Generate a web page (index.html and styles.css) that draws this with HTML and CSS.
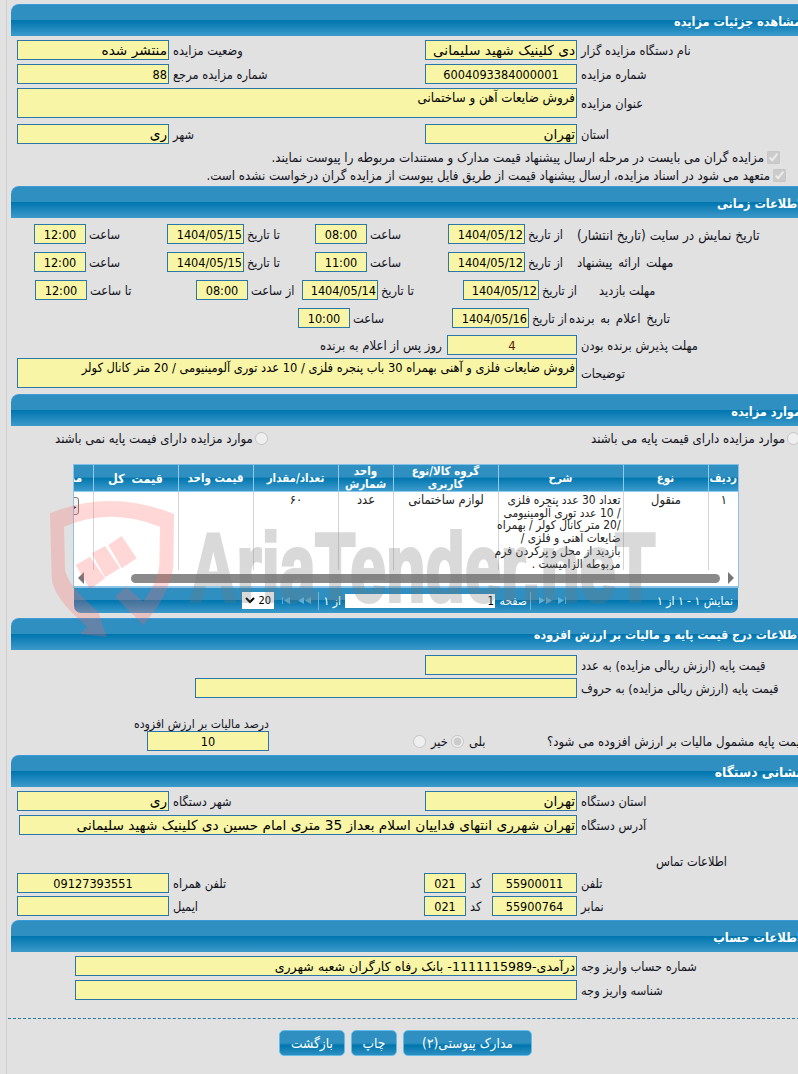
FILE: index.html
```html
<!DOCTYPE html>
<html lang="fa">
<head>
<meta charset="utf-8">
<title>مشاهده جزئیات مزایده</title>
<link rel="stylesheet" href="styles.css">
</head>
<body>
<div class="frame">
<main class="page">

<section class="sec s1">
  <h2 class="bar">مشاهده جزئیات مزایده</h2>
  <div class="row r2col"><input class="fld w152 rt" readonly value="منتشر شده"><span class="lbl">وضعیت مزایده</span><input class="fld w152 rt" readonly value="دی کلینیک شهید سلیمانی"><span class="lbl">نام دستگاه مزایده گزار</span></div>
  <div class="row r2col"><input class="fld w152" readonly value="88"><span class="lbl">شماره مزایده مرجع</span><input class="fld w152 ct" readonly value="6004093384000001"><span class="lbl">شماره مزایده</span></div>
  <div class="row tall rwide"><textarea class="fld area a-title" readonly>فروش ضایعات آهن و ساختمانی</textarea><span class="lbl">عنوان مزایده</span></div>
  <div class="row r2col gap6"><input class="fld w152 rt" readonly value="ری"><span class="lbl">شهر</span><input class="fld w152 rt" readonly value="تهران"><span class="lbl">استان</span></div>
  <div class="check c1"><input type="checkbox" checked disabled><span>مزایده گران می بایست در مرحله ارسال پیشنهاد قیمت مدارک و مستندات مربوطه را پیوست نمایند.</span></div>
  <div class="check c2"><input type="checkbox" checked disabled><span>متعهد می شود در اسناد مزایده، ارسال پیشنهاد قیمت از طریق فایل پیوست از مزایده گران درخواست نشده است.</span></div>
</section>

<section class="sec s2">
  <h2 class="bar">اطلاعات زمانی</h2>
  <div class="row rtime first"><input class="fld ct" readonly value="12:00"><span class="lbl">ساعت</span><input class="fld dt" readonly value="1404/05/15"><span class="lbl">تا تاریخ</span><input class="fld ct" readonly value="08:00"><span class="lbl">ساعت</span><input class="fld dt" readonly value="1404/05/12"><span class="lbl">از تاریخ</span><span class="lbl lastlbl lbl-long">تاریخ نمایش در سایت (تاریخ انتشار)</span></div>
  <div class="row rtime"><input class="fld ct" readonly value="12:00"><span class="lbl">ساعت</span><input class="fld dt" readonly value="1404/05/15"><span class="lbl">تا تاریخ</span><input class="fld ct" readonly value="11:00"><span class="lbl">ساعت</span><input class="fld dt" readonly value="1404/05/12"><span class="lbl">از تاریخ</span><span class="lbl lastlbl lbl-spaced">مهلت ارائه پیشنهاد</span></div>
  <div class="row rvisit"><input class="fld ct" readonly value="12:00"><span class="lbl">تا ساعت</span><input class="fld ct" readonly value="08:00"><span class="lbl">از ساعت</span><input class="fld dt" readonly value="1404/05/14"><span class="lbl">تا تاریخ</span><input class="fld dt" readonly value="1404/05/12"><span class="lbl">از تاریخ</span><span class="lbl lastlbl">مهلت بازدید</span></div>
  <div class="row rannounce"><input class="fld ct" readonly value="10:00"><span class="lbl">ساعت</span><input class="fld dt" readonly value="1404/05/16"><span class="lbl">از تاریخ</span><span class="lbl lastlbl lbl-spaced">تاریخ اعلام به برنده</span></div>
  <div class="row raccept"><span class="lbl lbl-days">روز پس از اعلام به برنده</span><input class="fld ct strong" readonly value="4"><span class="lbl">مهلت پذیرش برنده بودن</span></div>
  <div class="row tall rwide rnote"><textarea class="fld area a-note" readonly>فروش ضایعات فلزی و آهنی بهمراه 30 باب پنجره فلزی / 10 عدد توری آلومینیومی / 20 متر کانال کولر</textarea><span class="lbl">توضیحات</span></div>
</section>

<section class="sec s3">
  <h2 class="bar">موارد مزایده</h2>
  <div class="radios">
    <label class="radio r-left"><span>موارد مزایده دارای فیمت پایه نمی باشند</span><input type="radio" name="base" disabled></label>
    <label class="radio r-right"><span>موارد مزایده دارای قیمت پایه می باشند</span><input type="radio" name="base" disabled></label>
  </div>
  <div class="grid">
    <div class="tablewrap">
      <table>
        <colgroup><col class="c30"><col class="c85"><col class="c125"><col class="c105"><col class="c55"><col class="c85"><col class="c75"><col class="c85"><col class="c54"></colgroup>
        <thead><tr><th>ردیف</th><th>نوع</th><th>شرح</th><th>گروه کالا/نوع کاربری</th><th>واحد شمارش</th><th>تعداد/مقدار</th><th>قیمت واحد</th><th class="th-total">قیمت کل</th><th>مدارک</th></tr></thead>
        <tbody><tr><td class="cc">۱</td><td class="cc">منقول</td><td class="desc">تعداد 30 عدد پنجره فلزی<br>/ 10 عدد توری آلومینیومی<br>/20 متر کانال کولر / بهمراه<br>ضایعات آهنی و فلزی /<br>بازدید از محل و پرکردن فرم<br>مربوطه الزامیست .</td><td class="cc">لوازم ساختمانی</td><td class="cc">عدد</td><td class="cc">۶۰</td><td></td><td></td><td><button class="docbtn" type="button">جزئیات</button></td></tr></tbody>
      </table>
    </div>
    <div class="hscroll">
      <svg class="arrow" width="6" height="12" viewBox="0 0 6 12"><polygon points="6,0 6,12 0,6"/></svg>
      <div class="thumb"></div>
      <svg class="arrow" width="6" height="12" viewBox="0 0 6 12"><polygon points="0,0 0,12 6,6"/></svg>
    </div>
  </div>
  <div class="pager">
    <div class="sel"><svg width="10" height="7" viewBox="0 0 10 7"><path d="M1 1l4 4 4-4" fill="none" stroke="#000" stroke-width="2"/></svg><span>20</span></div>
    <svg class="nav n1" width="8" height="7" viewBox="0 0 8 7"><path d="M0 0h1v7H0zM8 0v7L2 3.500z"/></svg>
    <svg class="nav n2" width="13" height="7" viewBox="0 0 13 7"><path d="M6 0v7L0 3.500zM13 0v7L7 3.500z"/></svg>
    <i class="sep s-a"></i>
    <span class="ptxt p-of">از ۱</span>
    <input class="pnum" readonly value="1">
    <span class="ptxt p-page">صفحه</span>
    <i class="sep s-b"></i>
    <svg class="nav n3" width="13" height="7" viewBox="0 0 13 7"><path d="M0 0v7l6-3.500zM7 0v7l6-3.500z"/></svg>
    <svg class="nav n4" width="8" height="7" viewBox="0 0 8 7"><path d="M0 0v7l6-3.500zM7 0h1v7H7z"/></svg>
    <span class="ptxt p-info">نمایش ۱ - ۱ از ۱</span>
  </div>
</section>

<section class="sec s4">
  <h2 class="bar">اطلاعات درج قیمت پایه و مالیات بر ارزش افزوده</h2>
  <div class="row rbase1"><input class="fld w152" readonly><span class="lbl">قیمت پایه (ارزش ریالی مزایده) به عدد</span></div>
  <div class="row rbase2"><input class="fld wbase" readonly><span class="lbl">قیمت پایه (ارزش ریالی مزایده) به حروف</span></div>
  <div class="taxrow">
    <div class="taxbox"><span class="lbl taxlbl">درصد مالیات بر ارزش افزوده</span><input class="fld taxin ct" readonly value="10"></div>
    <div class="taxopts">
      <input type="radio" name="tax" disabled><span class="opt">خیر</span>
      <input type="radio" name="tax" checked disabled><span class="opt opt2">بلی</span>
    </div>
    <span class="lbl taxq">قیمت پایه مشمول مالیات بر ارزش افزوده می شود؟</span>
  </div>
</section>

<section class="sec s5">
  <h2 class="bar">نشانی دستگاه</h2>
  <div class="row r2col"><input class="fld w152 rt" readonly value="ری"><span class="lbl">شهر دستگاه</span><input class="fld w152 rt" readonly value="تهران"><span class="lbl">استان دستگاه</span></div>
  <div class="row raddr"><input class="fld waddr rt" readonly value="تهران شهرری انتهای فداییان اسلام بعداز 35 متری امام حسین دی کلینیک شهید سلیمانی"><span class="lbl">آدرس دستگاه</span></div>
  <div class="contact">اطلاعات تماس</div>
  <div class="row rphone"><input class="fld w152 ct" readonly value="09127393551"><span class="lbl">تلفن همراه</span><input class="fld ct" readonly value="021"><span class="lbl">کد</span><input class="fld ct" readonly value="55900011"><span class="lbl">تلفن</span></div>
  <div class="row rphone"><input class="fld w152" readonly><span class="lbl">ایمیل</span><input class="fld ct" readonly value="021"><span class="lbl">کد</span><input class="fld ct" readonly value="55900764"><span class="lbl">نمابر</span></div>
</section>

<section class="sec s6">
  <h2 class="bar">اطلاعات حساب</h2>
  <div class="row racc"><input class="fld wacc" readonly value="درآمدی-1111115989- بانک رفاه کارگران شعبه شهرری"><span class="lbl">شماره حساب واریز وجه</span></div>
  <div class="row racc"><input class="fld wacc" readonly><span class="lbl">شناسه واریز وجه</span></div>
</section>

<footer class="foot">
  <button class="btn b-back" type="button">بازگشت</button>
  <button class="btn b-print" type="button">چاپ</button>
  <button class="btn b-docs" type="button">مدارک پیوستی(۲)</button>
</footer>

<svg class="mark" width="620" height="160" viewBox="0 0 1860 480" aria-hidden="true">
  <g class="mark-red">
    <path d="M30 70Q210 -5 402 72L400 230Q385 320 310 405L225 320 258 290 310 335Q355 270 358 225L360 110Q210 50 72 110L75 240Q85 290 180 370L175 365 200 440 120 432 142 410Q35 320 35 260Z"/>
    <polygon points="205,165 245,138 290,205 245,235"/>
    <polygon points="155,190 195,168 240,235 195,262"/>
    <polygon points="107,225 150,200 195,265 150,298"/>
  </g>
  <text class="mark-txt" x="450" y="333" textLength="1395" lengthAdjust="spacingAndGlyphs">AriaTender.neT</text>
</svg>

</main>
</div>
</body>
</html>
```
FILE: styles.css
```css
html, body { margin: 0; padding: 0; height: 100%; overflow: hidden; background: #e1e1e1; }
body { font-family: "DejaVu Sans Condensed", "DejaVu Sans", sans-serif; font-size: 12.7px; color: #14141e; }
.frame { margin-left: 6px; border-left: 1px solid #cfcfcf; padding-left: 4px; min-height: 100%; }
.page { position: relative; width: 799px; padding-top: 4px; }

.bar {
  margin: 0; height: 32px; box-sizing: border-box; padding: 0 9px 0 0;
  direction: rtl; text-align: right; line-height: 33px; overflow: hidden;
  font-size: 12.6px; font-weight: bold; color: #fff;
  border-top: 1px solid #3a9bd8;
  border-top-left-radius: 8px;
  background: linear-gradient(#2e8fc0 0, #2e8fc0 47%, #0076ae 50%, #3d9acb 100%);
}
.s4 .bar { font-size: 12.25px; }
.s5 .bar { font-size: 13.8px; }
.s6 .bar { font-size: 12.9px; }

.row { display: grid; height: 20px; margin-top: 4px; padding-left: 6px; align-items: center; }
.row.tall { height: 30px; }
.r2col { grid-template-columns: 152px 256px 152px auto; }
.r2col.gap6 { margin-top: 6px; }
.rwide { grid-template-columns: 560px auto; }
.rtime { grid-template-columns: 52px 81px 77px 71px 52px 81px 77px 52px auto; padding-left: 23px; margin-top: 8px; }
.rtime.first { margin-top: 6px; }
.rvisit { grid-template-columns: 52px 109px 52px 54px 76px 85px 76px 60px auto; padding-left: 24px; margin-top: 8px; }
.rannounce { grid-template-columns: 52px 102px 77px 38px auto; padding-left: 287px; margin-top: 8px; }
.raccept { grid-template-columns: 127px 130px auto; padding-left: 309px; margin-top: 7px; }
.rnote { margin-top: 3px; margin-bottom: 6px; }
.rbase1 { grid-template-columns: 152px auto; padding-left: 414px; margin-top: 5px; }
.rbase2 { grid-template-columns: 382px auto; padding-left: 184px; margin-top: 3px; }
.raddr { grid-template-columns: 558px auto; padding-left: 8px; }
.rphone { grid-template-columns: 152px 255px 42px 26px 85px auto; margin-top: 3px; }
.racc { grid-template-columns: 502px auto; padding-left: 64px; }

.fld {
  box-sizing: border-box; width: 100%; height: 20px; margin: 0; padding: 0 1px;
  border: 1px solid #2a77a8; border-radius: 0; outline: none;
  background: #f8f6a6; color: #000; direction: rtl; text-align: right;
  font: 12.6px "DejaVu Sans Condensed", "DejaVu Sans", sans-serif;
}
.fld.rt { font: 13.7px "DejaVu Sans", sans-serif; }
.fld.wacc { font: 12.6px "DejaVu Sans", sans-serif; }
.fld.ct { text-align: center; direction: ltr; }
.fld.dt { direction: ltr; text-align: right; }
.fld.strong { color: #5a1a00; font-size: 13px; }
.area { height: 30px; resize: none; overflow: hidden; padding-top: 1px; line-height: 15px; }
.a-title { font-size: 13.2px; }
.a-note { font-size: 12.75px; }

.lbl { direction: rtl; text-align: left; padding: 0 0 0 4px; height: 20px; white-space: nowrap; line-height: 22px; }
.rtime .lbl, .rvisit .lbl, .rannounce .lbl { padding-left: 3px; }
.rtime .lastlbl, .rvisit .lastlbl { padding-left: 0; }
.rannounce .lastlbl { padding-left: 2px; }
.lbl-long { font-size: 13.6px; }
.lbl-days { font-size: 13px; padding-left: 0; }
.lbl-spaced { font-size: 13.2px; word-spacing: 2px; }

.check { display: flex; direction: rtl; align-items: center; height: 18px; white-space: nowrap; font-size: 13.2px; }
.check input { margin: 0 0 0 3px; width: 13px; height: 13px; }
.c1 { margin-top: 4px; padding-right: 30px; }
.c2 { padding-right: 24px; margin-bottom: 2px; }

.radios { display: flex; height: 16px; margin-top: 4px; padding-left: 44px; font-size: 13.1px; }
.radio { display: flex; align-items: center; direction: ltr; white-space: nowrap; }
.radio span { direction: rtl; }
.radio input { margin: 0 0 0 2px; width: 13px; height: 13px; }
.r-left { width: 214px; }
.r-right { margin-left: 322px; }

.grid {
  box-sizing: border-box; width: 666px; margin: 18px 0 0 62px;
  border: 1px solid #8cc3e6; border-top-color: #7fbfe8; border-bottom-width: 2px; background: #fff;
}
.tablewrap { direction: rtl; overflow: hidden; height: 105px; }
table { border-collapse: collapse; table-layout: fixed; width: 699px; direction: rtl; }
.c30 { width: 30px; } .c85 { width: 85px; } .c125 { width: 125px; } .c105 { width: 105px; }
.c55 { width: 55px; } .c75 { width: 75px; } .c54 { width: 54px; }
th {
  height: 26px; padding: 0; font-size: 11.5px; line-height: 13px; color: #fff; font-weight: bold;
  border-right: 1px solid #8fcbee; border-left: 1px solid #8fcbee; border-bottom: 1px solid #8fcbee;
  background: linear-gradient(#2e8fc0 0, #2e8fc0 47%, #0076ae 50%, #3d9acb 100%);
}
th:first-child { border-right: 0; }
.th-total { font-size: 12.5px; word-spacing: 3px; }
td {
  height: 78px; padding: 2px 1px 0 2px; vertical-align: top; box-sizing: border-box;
  font-size: 12.8px; line-height: 12.7px; color: #222;
  border: 1px solid #d4d4d4; border-top: 0;
}
td:first-child { border-right: 0; }
.cc { text-align: center; }
td.desc { text-align: right; white-space: nowrap; font-size: 11.9px; padding-right: 2px; }
.docbtn {
  display: block; width: 40px; height: 18px; margin: 3px 13px 0 0; padding: 0 1px; overflow: hidden;
  background: #f4f4f4; border: 1px solid #777; border-radius: 3px;
  font: 11px "DejaVu Sans Condensed", sans-serif; text-align: right; direction: rtl;
}

.hscroll { display: flex; align-items: center; height: 16px; padding: 0 4px; }
.arrow { fill: #777; flex: none; }
.thumb { height: 9px; flex: none; width: 589px; margin: 0 8px 0 47px; border-radius: 5px; background: #8a8a8a; }

.pager {
  display: flex; align-items: center; box-sizing: border-box;
  width: 664px; height: 25px; margin: 0 0 5px 63px;
  border-bottom-left-radius: 7px; border-bottom-right-radius: 7px;
  background: linear-gradient(#2e8fc0 0, #2e8fc0 47%, #0076ae 50%, #3d9acb 100%);
  color: #fff; font-size: 12px;
}
.sel { display: flex; align-items: center; justify-content: space-between; box-sizing: border-box; width: 32px; height: 17px; margin-left: 168px; padding: 0 3px; background: #fff; color: #000; font-size: 11px; }
.nav { fill: #5fb0d8; flex: none; }
.n1 { margin-left: 8px; }
.n2 { margin-left: 8px; }
.sep { display: block; width: 1px; height: 18px; background: #6fb5d8; flex: none; }
.s-a { margin-left: 7px; }
.ptxt { direction: rtl; white-space: nowrap; flex: none; }
.p-of { margin-left: 5px; width: 17px; }
.pnum { box-sizing: border-box; width: 150px; height: 14px; margin: 0 0 0 4px; padding: 0 1px; border: 0; background: #fff; direction: rtl; font: 11.5px "DejaVu Sans Condensed", sans-serif; outline: none; }
.p-page { margin-left: 4px; width: 28px; }
.s-b { margin-left: 3px; }
.n3 { margin-left: 8px; }
.n4 { margin-left: 6px; }
.p-info { margin-left: auto; margin-right: 5px; }

.taxrow { display: flex; margin-top: 20px; padding-left: 123px; padding-bottom: 4px; height: 33px; }
.taxbox { display: flex; flex-direction: column; width: 135px; flex: none; }
.taxlbl { line-height: 13px; height: 13px; padding: 0; white-space: nowrap; font-size: 12.2px; }
.taxin { width: 122px; margin-left: 13px; }
.taxopts { display: flex; align-items: center; flex: none; height: 20px; margin: 13px 0 0 144px; direction: ltr; }
.taxopts input { margin: 0; width: 13px; height: 13px; }
.opt { width: 20px; margin-left: 5px; direction: rtl; text-align: left; }
.taxq { margin: 13px 0 0 58px; padding: 0; font-size: 13.1px; }

.contact { direction: rtl; height: 16px; line-height: 16px; margin: 19px 0 0 644px; width: 72px; white-space: nowrap; }
.s5 { padding-bottom: 4px; }

.foot { margin-top: 18px; border-top: 1px dashed #2a77a8; margin-left: -3px; padding-top: 11px; display: flex; padding-left: 271px; gap: 6px; direction: ltr; }
.btn {
  box-sizing: border-box; height: 26px; padding: 0; color: #fff; direction: rtl;
  font: 13.6px "DejaVu Sans Condensed", sans-serif;
  border: 1px solid #63bdea; border-radius: 5px;
  background: linear-gradient(#2e8fc0 0, #2e8fc0 50%, #0076ae 60%, #2e8fc0 100%);
}
.b-back { width: 66px; } .b-print { width: 46px; } .b-docs { width: 129px; }

.mark { position: absolute; left: 29px; top: 490px; pointer-events: none; overflow: visible; }
.mark-red { fill: #ff6464; opacity: .25; }
.mark-txt { font: bold 290px "Liberation Sans Narrow", "Liberation Sans", sans-serif; fill: #777; stroke: #777; stroke-width: 12px; opacity: .27; }
```
